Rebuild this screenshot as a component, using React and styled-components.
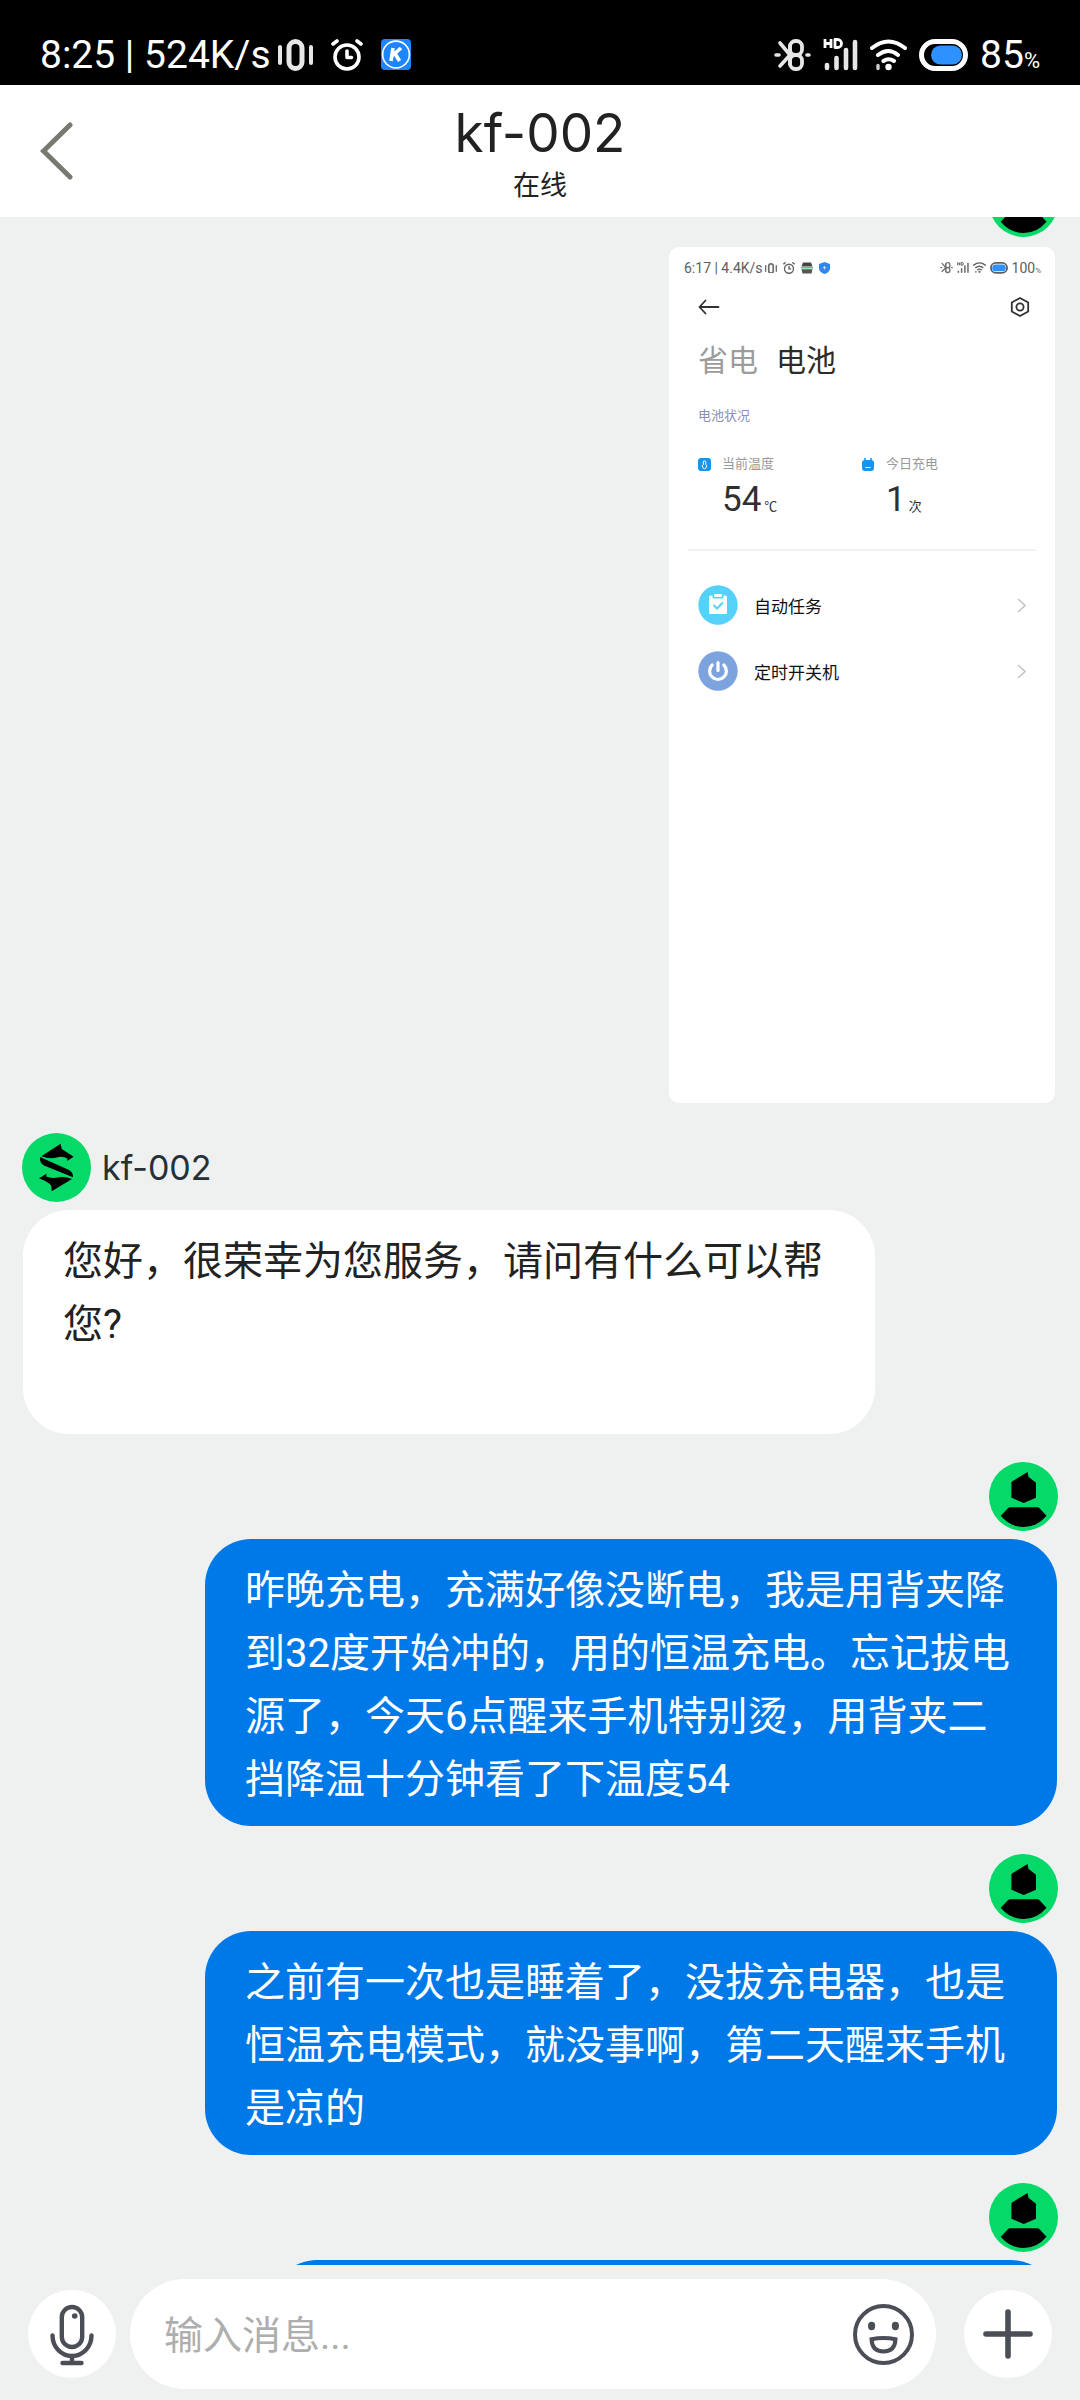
import React, { useLayoutEffect, useRef } from "react";
import styled, { createGlobalStyle } from "styled-components";

const GlobalStyle = createGlobalStyle`
  *, *::before, *::after { box-sizing: border-box; }
  body {
    margin: 0;
    background: #eff1f1;
    font-family: Roboto, "Noto Sans CJK SC", sans-serif;
    color: #222;
  }
  button, input { font: inherit; color: inherit; }
  svg { display: block; flex: none; }
`;

const Page = styled.div`
  display: flex;
  flex-direction: column;
  height: 100vh;
`;

/* ---------- system status bar ---------- */

const StatusBar = styled.div`
  display: flex;
  align-items: center;
  gap: 7px;
  flex: none;
  height: 85px;
  padding: 24px 40px 0;
  background: #000;
  color: #fff;
  font-size: 39px;
  line-height: 40px;
  white-space: pre;
`;

const StatusGroup = styled.div`
  display: flex;
  align-items: center;
  gap: ${(p) => p.$gap}px;
  margin-left: ${(p) => (p.$end ? "auto" : 0)};
`;

const Percent = styled.span`
  font-size: ${(p) => p.$size}px;
  line-height: 0;
`;

/* ---------- header ---------- */

const Header = styled.header`
  display: grid;
  grid-template-columns: 160px 1fr 160px;
  align-items: center;
  flex: none;
  height: 132px;
  background: #fff;
`;

const BackButton = styled.button`
  display: flex;
  align-items: center;
  height: 100%;
  padding: 0 0 0 40px;
  border: 0;
  background: none;
`;

const Heading = styled.div`
  display: flex;
  flex-direction: column;
  align-items: center;
  gap: 3px;
  padding-top: 7px;
`;

const Title = styled.h1`
  margin: 0;
  font: 400 53px/60px Inter, sans-serif;
`;

const Presence = styled.span`
  font-size: 27px;
  line-height: 40px;
`;

/* ---------- messages ---------- */

const Chat = styled.main`
  flex: 1;
  min-height: 0;
  overflow-y: auto;
  scrollbar-width: none;
`;

const Thread = styled.div`
  display: flex;
  flex-direction: column;
  gap: 28px;
  padding: 0 22px;
`;

const Message = styled.article`
  display: flex;
  flex-direction: column;
  align-items: ${(p) => (p.$mine ? "flex-end" : "flex-start")};
  gap: 8px;
`;

const Sender = styled.div`
  display: flex;
  align-items: center;
  gap: 11px;
  font: 400 34px/40px Inter, sans-serif;
  color: #263036;
`;

const Bubble = styled.p`
  width: ${(p) => (p.$short ? "calc(100% - 250px)" : "auto")};
  max-width: calc(100% - 184px);
  min-height: 98px;
  margin: 0 1px;
  padding: 20px 40px 15px;
  border-radius: 46px;
  background: ${(p) => (p.$mine ? "#0079e8" : "#fff")};
  color: ${(p) => (p.$mine ? "#fff" : "#222")};
  font-size: 40px;
  line-height: 63px;
  white-space: pre-wrap;
`;

/* ---------- shared phone screen ---------- */

const Shot = styled.div`
  width: 386px;
  height: 856px;
  margin: 2px 3px;
  border-radius: 10px;
  background: #fff;
  color: #303030;
`;

const ShotStatus = styled.div`
  display: flex;
  align-items: center;
  gap: 2px;
  padding: 13px 14px 0 15px;
  color: #606060;
  font-size: 14px;
  line-height: 16px;
  white-space: pre;
`;

const ShotBar = styled.div`
  display: flex;
  align-items: center;
  justify-content: space-between;
  height: 24px;
  margin: 19px 25px 0 29px;
`;

const ShotTabs = styled.div`
  display: flex;
  gap: 18px;
  margin: 22px 29px 0;
  font-size: 30px;
  line-height: 40px;
`;

const ShotTab = styled.span`
  color: ${(p) => (p.$active ? "#2c2c2c" : "#9c9c9c")};
`;

const ShotCaption = styled.div`
  margin: 25px 29px 0;
  font-size: 13px;
  line-height: 20px;
  color: #8b90b4;
`;

const Stats = styled.div`
  display: grid;
  grid-template-columns: 164px 1fr;
  margin: 28px 29px 0;
`;

const Stat = styled.div`
  display: grid;
  grid-template-columns: 24px 1fr;
  align-items: center;
  font-size: 13px;
  line-height: 20px;
`;

const StatLabel = styled.span`
  color: #999;
`;

const StatValue = styled.span`
  grid-column: 2;
  display: flex;
  align-items: baseline;
  gap: 3px;
  line-height: 52px;
`;

const StatNumber = styled.span`
  font-size: 35px;
`;

const Divider = styled.hr`
  height: 2px;
  margin: 16px 19px 0;
  border: 0;
  background: #f2f2f2;
`;

const Rows = styled.div`
  display: grid;
  gap: 26px;
  margin: 34px 29px 0;
`;

const Row = styled.div`
  display: flex;
  align-items: center;
  height: 40px;
  font-size: 17px;
  color: #111;
`;

const RowLabel = styled.span`
  flex: 1;
  margin-left: 16px;
`;

/* ---------- composer ---------- */

const Composer = styled.form`
  display: flex;
  align-items: center;
  flex: none;
  padding: 14px 28px 11px;
`;

const RoundButton = styled.button`
  flex: none;
  width: 88px;
  height: 88px;
  padding: 0;
  border: 0;
  border-radius: 50%;
  background: #fff;
`;

const Field = styled.div`
  display: flex;
  align-items: center;
  flex: 1;
  min-width: 0;
  height: 110px;
  margin: 0 28px 0 14px;
  padding: 0 22px 0 34px;
  border-radius: 55px;
  background: #fff;
`;

const MessageInput = styled.input`
  flex: 1;
  min-width: 0;
  height: 100%;
  padding: 4px 0 0;
  border: 0;
  outline: 0;
  background: none;
  font-size: 39px;
  &::placeholder { color: #aeaeae; opacity: 1; }
`;

const PlainButton = styled.button`
  padding: 0;
  border: 0;
  background: none;
`;

/* ---------- icons ---------- */

const stroke = { fill: "none", stroke: "currentColor", strokeLinecap: "round", strokeLinejoin: "round" };

const VibrateIcon = ({ width = 35 }) => (
  <svg width={width} viewBox="0 0 35 32" {...stroke} opacity=".9">
    <rect x="11" y="2.5" width="13" height="27" rx="6.5" strokeWidth="5" />
    <path d="M2 8v16M33 8v16" strokeWidth="4" />
  </svg>
);

const AlarmIcon = ({ width = 32 }) => (
  <svg width={width} viewBox="0 0 32 32" {...stroke} strokeWidth="3.6">
    <circle cx="16" cy="18" r="12" />
    <path d="M16 12v6.5h4.5M2 5l4-3M30 5l-4-3" />
  </svg>
);

const KIcon = () => (
  <svg width="30" height="31" viewBox="0 0 30 31">
    <rect width="30" height="31" rx="4" fill="#1d86ff" />
    <circle cx="15" cy="15.5" r="13.4" fill="none" stroke="#fff" strokeWidth="1.6" />
    <path d="M12 9l-2 13M20 9l-8.500 7.500M14 14.500l4.500 7.500" fill="none" stroke="#fff" strokeWidth="3.6" />
  </svg>
);

const BluetoothIcon = ({ width = 37 }) => (
  <svg width={width} viewBox="0 0 37 32" {...stroke} opacity=".9">
    <path d="M6 4l10 12L6 27" strokeWidth="3.6" />
    <rect x="16" y="2" width="12" height="14" rx="5.500" strokeWidth="3.8" />
    <rect x="16" y="16" width="12" height="14" rx="5.500" strokeWidth="3.8" />
    <path d="M16 7v18" strokeWidth="3.8" />
    <path d="M2 16h3M33 16h2" strokeWidth="3.6" />
  </svg>
);

const SignalIcon = ({ width = 35 }) => (
  <svg width={width} viewBox="0 0 35 33" {...stroke}>
    <path d="M2 1v9M8 1v9M2 5.500h6M12 1.500v8h2.500a4 4 0 0 0 0-8z" strokeWidth="2.8" strokeLinecap="butt" />
    <path d="M4 27v3M13.500 20v10M23 12v18M32 4v26" strokeWidth="4.6" opacity=".9" />
  </svg>
);

const WifiIcon = ({ width = 37 }) => (
  <svg width={width} viewBox="0 0 37 32" {...stroke} strokeWidth="4">
    <path d="M2 9Q18.500-4 35 9M8 16Q18.500 8 28 16M13.500 22Q18.500 18.500 24 22" />
    <circle cx="18.500" cy="28" r="3.200" fill="currentColor" stroke="none" />
    <path d="M8 26.500v3" strokeWidth="3.400" opacity=".8" />
  </svg>
);

const BatteryIcon = ({ width = 49, full }) => (
  <svg width={width} viewBox="0 0 49 32">
    <rect x="2.500" y="2.500" width="44" height="27" rx="13.500" fill="none" stroke="currentColor" strokeWidth="5" />
    <rect x={full ? 6 : 12} y="6.500" width={full ? 37 : 31} height="19" rx="9.500" fill="#2d92ff" />
  </svg>
);

const BackIcon = () => (
  <svg width="33" height="58" viewBox="0 0 33 58" fill="none" stroke="#797972" strokeWidth="5" strokeLinecap="round">
    <path d="M30 3L3.500 29 30 55" />
  </svg>
);

const UserAvatar = () => (
  <svg width="69" height="69" viewBox="0 0 69 69" role="img" aria-label="user">
    <circle cx="34.500" cy="34.500" r="34.500" fill="#05d967" />
    <path d="M23 19.500L38.600 10 39.400 14.700 47 20.700V35.700L34.800 41 22.400 35.700V20.500z" />
    <path d="M11.700 53.700L19 46.200Q20 45.300 21 45.300H48.500Q49.600 45.300 50.500 46.200L57.500 53.700Q48 65 34.700 65T11.700 53.700z" />
  </svg>
);

const AgentAvatar = () => (
  <svg width="69" height="69" viewBox="0 0 69 69" role="img" aria-label="kf-002">
    <circle cx="34.500" cy="34.500" r="34.500" fill="#05d967" />
    <path d="M19.300 23.300L38.600 10.700 39.800 16 51.700 23.700 45 28 45.500 25.500Q40 22.500 34 24.800 27 26.200 19.300 23.300z" />
    <path d="M18 24L46 36.500Q51.500 39 51 44.300L22 32.500Q17.500 30 18 24z" />
    <path d="M17 45.300L24.500 40.700 24.200 43.500Q30 45.800 37 44.300 43 43 50 46L29.700 58.300 29.200 52.500Q25 48 17 45.300z" />
  </svg>
);

const MicIcon = () => (
  <svg width="88" height="88" viewBox="0 0 88 88" fill="none" stroke="#4b4e57" strokeWidth="4.400" strokeLinecap="round">
    <rect x="33.800" y="17" width="20.400" height="40" rx="10.200" />
    <path d="M24.500 45.500a19.500 20.500 0 0 0 39 0M44 66v7M34.500 73h19" />
    <circle cx="46.700" cy="26" r="2.800" fill="#4b4e57" stroke="none" />
  </svg>
);

const SmileIcon = () => (
  <svg width="61" height="61" viewBox="0 0 61 61" fill="none" stroke="#4b4e57" strokeWidth="4">
    <circle cx="30.500" cy="30.500" r="28.500" />
    <path d="M18.500 35.200Q30.500 32.800 42.500 35.200 42 47.500 30.500 47.500T18.500 35.200z" />
    <ellipse cx="18.600" cy="22" rx="3.600" ry="4.200" fill="#4b4e57" stroke="none" />
    <ellipse cx="42.400" cy="22" rx="3.600" ry="4.200" fill="#4b4e57" stroke="none" />
  </svg>
);

const PlusIcon = () => (
  <svg width="88" height="88" viewBox="0 0 88 88" stroke="#4b4e57" strokeWidth="5.600" strokeLinecap="round">
    <path d="M22 44h44M44 22v44" />
  </svg>
);

const ArrowIcon = () => (
  <svg width="22" height="16" viewBox="0 0 22 16" {...stroke} strokeWidth="1.800">
    <path d="M20.500 8H1.500M7.500 1.500L1.500 8l6 6.500" />
  </svg>
);

const HexIcon = () => (
  <svg width="20" height="20" viewBox="0 0 20 20" {...stroke} strokeWidth="1.800">
    <path d="M10 1l8.200 4.500v9L10 19l-8.200-4.500v-9z" />
    <circle cx="10" cy="10" r="3.600" />
  </svg>
);

const CardIcon = () => (
  <svg width="12" height="12" viewBox="0 0 12 12">
    <path d="M2 .5h8l1.500 4H.5z" fill="#444" />
    <path d="M0 5.800h12" stroke="#4cc070" strokeWidth="1.400" />
    <path d="M.5 7.200h11l-1 4.300h-9z" fill="#555" />
  </svg>
);

const ShieldIcon = () => (
  <svg width="11" height="12" viewBox="0 0 11 12">
    <path d="M5.500 0L11 2v5q-1 3.500-5.500 5Q1 10.500 0 7V2z" fill="#2f86ec" />
    <path d="M5.500 4v3.500M3.800 5.700h3.400" stroke="#b9dcff" />
  </svg>
);

const ThermoIcon = () => (
  <svg width="13" height="13" viewBox="0 0 13 13">
    <rect width="13" height="13" rx="3" fill="#1695ee" />
    <path d="M5.300 6.500V4a1.200 1.200 0 0 1 2.400 0v2.500a2.200 2.200 0 1 1-2.400 0z" fill="none" stroke="#fff" />
  </svg>
);

const PlugIcon = () => (
  <svg width="12" height="13" viewBox="0 0 12 13">
    <path d="M3 0v3M9 0v3" stroke="#1695ee" strokeWidth="1.600" />
    <rect y="2" width="12" height="11" rx="3" fill="#1695ee" />
    <path d="M3.500 9.500h5" stroke="#fff" />
  </svg>
);

const TaskIcon = () => (
  <svg width="40" height="40" viewBox="0 0 40 40">
    <circle cx="20" cy="20" r="19.700" fill="#55d1fa" />
    <rect x="11" y="10.500" width="18" height="18.500" rx="1.500" fill="#fff" />
    <path d="M14.500 9.500h11v2.500a1.500 1.500 0 0 1-1.500 1.500h-8a1.500 1.500 0 0 1-1.500-1.500z" fill="#55d1fa" />
    <rect x="16" y="9" width="8" height="3" rx="1.200" fill="#fff" />
    <path d="M15.500 20l3.500 3.500 6-6" fill="none" stroke="#55d1fa" strokeWidth="2" />
  </svg>
);

const PowerIcon = () => (
  <svg width="40" height="40" viewBox="0 0 40 40">
    <circle cx="20" cy="20" r="19.700" fill="#7da3df" />
    <path d="M14.200 14a8.400 8.400 0 1 0 11.600 0M20 11.500v8" fill="none" stroke="#fff" strokeWidth="3.200" strokeLinecap="round" />
  </svg>
);

const ChevronIcon = () => (
  <svg width="9" height="15" viewBox="0 0 9 15" fill="none" stroke="#c4c4c4" strokeWidth="1.600">
    <path d="M1 1l7 6.500L1 14" />
  </svg>
);

const BatteryShot = () => (
  <Shot>
    <ShotStatus>
      <span>6:17 | 4.4K/s</span>
      <StatusGroup $gap={6}>
        <VibrateIcon width={12} />
        <AlarmIcon width={12} />
        <CardIcon />
        <ShieldIcon />
      </StatusGroup>
      <StatusGroup $gap={4} $end>
        <BluetoothIcon width={13} />
        <SignalIcon width={12} />
        <WifiIcon width={13} />
        <BatteryIcon width={18} full />
        <span>100<Percent $size={8}>%</Percent></span>
      </StatusGroup>
    </ShotStatus>
    <ShotBar>
      <ArrowIcon />
      <HexIcon />
    </ShotBar>
    <ShotTabs>
      <ShotTab>省电</ShotTab>
      <ShotTab $active>电池</ShotTab>
    </ShotTabs>
    <ShotCaption>电池状况</ShotCaption>
    <Stats>
      <Stat>
        <ThermoIcon />
        <StatLabel>当前温度</StatLabel>
        <StatValue><StatNumber>54</StatNumber>℃</StatValue>
      </Stat>
      <Stat>
        <PlugIcon />
        <StatLabel>今日充电</StatLabel>
        <StatValue><StatNumber>1</StatNumber>次</StatValue>
      </Stat>
    </Stats>
    <Divider />
    <Rows>
      <Row><TaskIcon /><RowLabel>自动任务</RowLabel><ChevronIcon /></Row>
      <Row><PowerIcon /><RowLabel>定时开关机</RowLabel><ChevronIcon /></Row>
    </Rows>
  </Shot>
);

const MyMessage = ({ children }) => (
  <Message $mine>
    <UserAvatar />
    {children}
  </Message>
);

export default function App() {
  const chat = useRef(null);

  useLayoutEffect(() => {
    chat.current.scrollTop = 49;
  }, []);

  return (
    <Page>
      <GlobalStyle />
      <StatusBar>
        <span>8:25 | 524K/s</span>
        <StatusGroup $gap={18}>
          <VibrateIcon />
          <AlarmIcon />
          <KIcon />
        </StatusGroup>
        <StatusGroup $gap={12} $end>
          <BluetoothIcon />
          <SignalIcon />
          <WifiIcon />
          <BatteryIcon />
          <span>85<Percent $size={22}>%</Percent></span>
        </StatusGroup>
      </StatusBar>

      <Header>
        <BackButton type="button" aria-label="返回"><BackIcon /></BackButton>
        <Heading>
          <Title>kf-002</Title>
          <Presence>在线</Presence>
        </Heading>
      </Header>

      <Chat ref={chat}>
        <Thread>
          <MyMessage><BatteryShot /></MyMessage>
          <Message>
            <Sender><AgentAvatar />kf-002</Sender>
            <Bubble>{"您好，很荣幸为您服务，请问有什么可以帮您?\n\n"}</Bubble>
          </Message>
          <MyMessage>
            <Bubble $mine>昨晚充电，充满好像没断电，我是用背夹降到32度开始冲的，用的恒温充电。忘记拔电源了，今天6点醒来手机特别烫，用背夹二挡降温十分钟看了下温度54</Bubble>
          </MyMessage>
          <MyMessage>
            <Bubble $mine>之前有一次也是睡着了，没拔充电器，也是恒温充电模式，就没事啊，第二天醒来手机是凉的</Bubble>
          </MyMessage>
          <MyMessage>
            <Bubble $mine $short />
          </MyMessage>
        </Thread>
      </Chat>

      <Composer onSubmit={(e) => e.preventDefault()}>
        <RoundButton type="button" aria-label="语音"><MicIcon /></RoundButton>
        <Field>
          <MessageInput aria-label="输入消息" placeholder="输入消息..." />
          <PlainButton type="button" aria-label="表情"><SmileIcon /></PlainButton>
        </Field>
        <RoundButton type="button" aria-label="更多"><PlusIcon /></RoundButton>
      </Composer>
    </Page>
  );
}
